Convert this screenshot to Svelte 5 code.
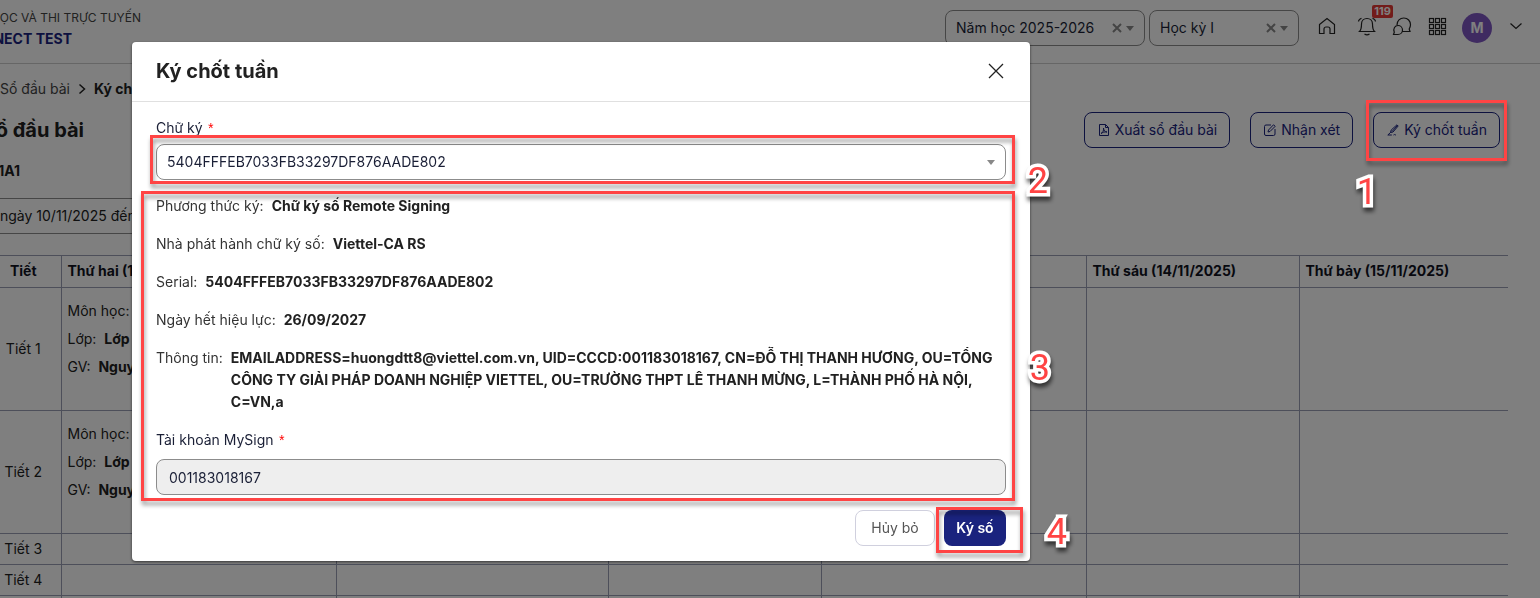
<script lang="ts">
	interface Lesson {
		subject: string;
		className: string;
		teacher: string;
	}

	interface Period {
		name: string;
		lesson: Lesson | null;
	}

	const serial = '5404FFFEB7033FB33297DF876AADE802';

	const days = [
		{ name: 'Thứ hai (10/11/2025)', width: 275 },
		{ name: '', width: 272 },
		{ name: '', width: 213 },
		{ name: '', width: 265 },
		{ name: 'Thứ sáu (14/11/2025)', width: 213 },
		{ name: 'Thứ bảy (15/11/2025)', width: 209 }
	];

	const lesson: Lesson = { subject: '', className: 'Lớp', teacher: 'Nguyễn' };

	const periods: Period[] = [
		{ name: 'Tiết 1', lesson },
		{ name: 'Tiết 2', lesson },
		{ name: 'Tiết 3', lesson: null },
		{ name: 'Tiết 4', lesson: null },
		{ name: '', lesson: null }
	];

	const details = [
		{ label: 'Phương thức ký:', value: 'Chữ ký số Remote Signing' },
		{ label: 'Nhà phát hành chữ ký số:', value: 'Viettel-CA RS' },
		{ label: 'Serial:', value: serial },
		{ label: 'Ngày hết hiệu lực:', value: '26/09/2027' },
		{
			label: 'Thông tin:',
			value:
				'EMAILADDRESS=huongdtt8@viettel.com.vn, UID=CCCD:001183018167, CN=ĐỖ THỊ THANH HƯƠNG, OU=TỔNG CÔNG TY GIẢI PHÁP DOANH NGHIỆP VIETTEL, OU=TRƯỜNG THPT LÊ THANH MỪNG, L=THÀNH PHỐ HÀ NỘI, C=VN,a'
		}
	];

	let account = '001183018167';
</script>

<div class="page">
	<header class="topbar">
		<div class="brand">
			<div class="brand-sub"><span>ỌC VÀ THI TRỰC TUYẾN</span></div>
			<div class="brand-name"><span>NECT TEST</span></div>
		</div>
		<div class="tools">
			<div class="picker year">
				<select aria-label="Năm học">
					<option>Năm học 2025-2026</option>
				</select>
				<button class="clear" aria-label="Xóa năm học">
					<svg width="10" height="10" viewBox="0 0 10 10"><path d="M1 1l8 8M9 1l-8 8" /></svg>
				</button>
				<span class="caret"></span>
			</div>
			<div class="picker term">
				<select aria-label="Học kỳ">
					<option>Học kỳ I</option>
				</select>
				<button class="clear" aria-label="Xóa học kỳ">
					<svg width="10" height="10" viewBox="0 0 10 10"><path d="M1 1l8 8M9 1l-8 8" /></svg>
				</button>
				<span class="caret"></span>
			</div>
			<nav class="icons">
				<button class="icon" aria-label="Trang chủ">
					<svg width="20" height="20" viewBox="0 0 20 20">
						<path d="M2.5 8.5L10 2.500l7.500 6v9H13V13a2 2 0 0 0-2-2H9a2 2 0 0 0-2 2v4.500H2.500z" />
					</svg>
				</button>
				<button class="icon bell" aria-label="Thông báo">
					<svg width="20" height="20" viewBox="0 0 20 20">
						<path
							d="M2.500 15.500c1.500-1.500 2-4 2-7.500C4.500 4.500 7 2.500 10 2.500s5.500 2 5.500 5.500c0 3.500.5 6 2 7.500zM7.500 18c1.500 1 3.500 1 5 0M4.500 2.200C2.500 3 1.500 4 1.500 5.500M15.500 2.200c2 .8 3 1.800 3 3.300"
						/>
					</svg>
					<span class="count">119</span>
				</button>
				<button class="icon" aria-label="Tin nhắn">
					<svg width="20" height="20" viewBox="0 0 20 20">
						<path
							d="M5 9C5 4.500 8 2 11.800 2c4 0 6.700 3 6.700 6.700 0 1.800-.6 3-1.300 4.300l.8 2.500h-7.500M1.500 18.500l.8-2.200C.8 12.500 3 9.500 6 9.500a4.500 4.500 0 0 1 0 9z"
						/>
					</svg>
				</button>
				<button class="icon" aria-label="Ứng dụng">
					<svg width="20" height="20" viewBox="0 0 20 20">
						{#each [2.5, 8.5, 14.5] as y}
							{#each [2.5, 8.5, 14.5] as x}
								<rect {x} {y} width="4" height="4" />
							{/each}
						{/each}
					</svg>
				</button>
			</nav>
			<button class="avatar" aria-label="Tài khoản">M</button>
			<button class="icon more" aria-label="Mở menu tài khoản">
				<svg width="12" height="12" viewBox="0 0 12 12"><path d="M.5 3.500L6 8.500l5.500-5" /></svg>
			</button>
		</div>
	</header>

	<main class="content">
		<nav class="breadcrumb">
			<a href="#so-dau-bai">Sổ đầu bài</a>
			<svg width="8" height="12" viewBox="0 0 8 12"><path d="M1.500 1.500L6.500 6l-5 4.500" /></svg>
			<b>Ký chốt</b>
		</nav>

		<div class="heading">
			<h1><span>ổ đầu bài</span></h1>
			<div class="actions">
				<button class="outline">
					<svg width="12" height="12" viewBox="0 0 12 12">
						<path
							d="M1.500.5h6L10.500 3.500v8h-9zM7.500.5v3h3M3 9.500c2-1 2.800-3 2.500-5.500C5.800 6.500 7 8 9 8 6.500 7.500 4.500 8.500 3 9.500z"
						/>
					</svg>
					Xuất sổ đầu bài
				</button>
				<button class="outline">
					<svg width="12" height="12" viewBox="0 0 12 12">
						<path
							d="M7 1H2A1.500 1.500 0 0 0 .5 2.500V10A1.500 1.500 0 0 0 2 11.500h7.500A1.500 1.500 0 0 0 11 10V5M4 8l.5-2L9.500.8l1.700 1.500L6 7.500z"
						/>
					</svg>
					Nhận xét
				</button>
				<button class="outline">
					<svg width="12" height="12" viewBox="0 0 12 12">
						<path
							d="M3.500 8.500L4.200 6 10 .8l1.200 1.200L6 8zM5 7.500L10.500 1.500M3.500 8.500L.8 11h4M6.500 11c1-1 1.500 0 2.500 0"
						/>
					</svg>
					Ký chốt tuần
				</button>
			</div>
		</div>

		<div class="class-name"><span>1A1</span></div>

		<select class="week" aria-label="Tuần">
			<option>ngày 10/11/2025 đến</option>
		</select>

		<table>
			<colgroup>
				<col style="width: 61px" />
				{#each days as day}
					<col style="width: {day.width}px" />
				{/each}
			</colgroup>
			<thead>
				<tr>
					<th class="period">Tiết</th>
					{#each days as day}
						<th>{day.name}</th>
					{/each}
				</tr>
			</thead>
			<tbody>
				{#each periods as period}
					<tr class:filled={period.lesson}>
						<td class="period">{period.name}</td>
						{#each days as day, i}
							<td>
								{#if i === 0 && period.lesson}
									<p>Môn học: <b>{period.lesson.subject}</b></p>
									<p>Lớp: <b>{period.lesson.className}</b></p>
									<p>GV: <b>{period.lesson.teacher}</b></p>
								{/if}
							</td>
						{/each}
					</tr>
				{/each}
			</tbody>
		</table>
	</main>
</div>

<div class="backdrop">
	<div class="modal" role="dialog" aria-modal="true" aria-labelledby="modal-title">
		<div class="modal-header">
			<h2 id="modal-title">Ký chốt tuần</h2>
			<button class="close" aria-label="Đóng">
				<svg width="16" height="16" viewBox="0 0 16 16"><path d="M1 1l14 14M15 1L1 15" /></svg>
			</button>
		</div>

		<form class="modal-body" on:submit|preventDefault>
			<label for="signature">Chữ ký <span class="required">*</span></label>
			<div class="picker signature">
				<select id="signature">
					<option>{serial}</option>
				</select>
				<span class="caret"></span>
			</div>

			<dl>
				{#each details as item}
					<div class="detail">
						<dt>{item.label}</dt>
						<dd>{item.value}</dd>
					</div>
				{/each}
			</dl>

			<label for="account">Tài khoản MySign <span class="required">*</span></label>
			<input id="account" type="text" readonly bind:value={account} />

			<div class="modal-footer">
				<button type="button" class="cancel">Hủy bỏ</button>
				<button type="submit" class="submit">Ký số</button>
			</div>
		</form>

		<!-- Step markers inside the dialog -->
		<div class="mark mark-select"></div>
		<div class="mark mark-details"></div>
		<div class="mark mark-submit"></div>
		<span class="step step-2">2</span>
		<span class="step step-3">3</span>
		<span class="step step-4">4</span>
	</div>

	<div class="mark mark-open"></div>
	<span class="step step-1">1</span>
</div>

<style>
	:global(body) {
		font-family: Inter, 'Liberation Sans', sans-serif;
		font-size: 14px;
		line-height: 22px;
		color: #212121;
		background: #fff;
	}

	:global(*) {
		box-sizing: border-box;
	}

	button,
	select,
	input {
		font: inherit;
		color: inherit;
	}

	button {
		padding: 0;
		border: none;
		background: none;
		cursor: pointer;
	}

	h1,
	h2,
	p,
	dl,
	dd {
		margin: 0;
	}

	svg {
		display: block;
		flex: none;
		fill: none;
		stroke: currentColor;
	}

	.page {
		height: 100vh;
		overflow: hidden;
	}

	.topbar {
		display: flex;
		justify-content: space-between;
		height: 64px;
		padding: 8px 18px 0 0;
		border-bottom: 1px solid #ccc;
	}

	.brand-sub {
		font-size: 12px;
		line-height: 20px;
		color: #444;
	}

	.brand-name {
		line-height: 22px;
		font-weight: 700;
		color: #1a237e;
	}

	/* Left-clipped texts: the start runs out of the window */
	.brand-sub,
	.brand-name,
	.class-name,
	h1 {
		display: flex;
		justify-content: flex-end;
		white-space: nowrap;
	}

	.brand-sub {
		width: 141px;
	}

	.brand-name {
		width: 72px;
	}

	.tools {
		display: flex;
		align-items: flex-start;
		padding-top: 2px;
	}

	.picker {
		position: relative;
		height: 36px;
		color: #1a1f36;
	}

	.picker select {
		width: 100%;
		height: 100%;
		padding: 0 10px;
		border: 1px solid #8c8c8c;
		border-radius: 8px;
		background: transparent;
		appearance: none;
	}

	.year {
		width: 200px;
		margin-right: 4px;
	}

	.term {
		width: 150px;
		margin-right: 18px;
	}

	.clear {
		position: absolute;
		top: 13px;
		right: 23px;
		color: #888;
	}

	.clear svg {
		stroke-width: 2;
	}

	.caret {
		position: absolute;
		top: 16px;
		right: 11px;
		border: 4px solid transparent;
		border-top: 5px solid #888;
		border-bottom: none;
		pointer-events: none;
	}

	.icons {
		display: flex;
		gap: 15px;
		padding-top: 6px;
	}

	.icon {
		position: relative;
		color: #222;
	}

	.icon svg {
		stroke-width: 1.2;
	}

	.bell {
		margin-left: 5px;
	}

	.count {
		position: absolute;
		top: -11px;
		right: -16px;
		padding: 0 2px;
		border-radius: 2px;
		background: #e53935;
		color: #fff;
		font-size: 11px;
		line-height: 13px;
		font-weight: 700;
	}

	.avatar {
		width: 30px;
		height: 30px;
		margin: 3px 18px 0 15px;
		border-radius: 50%;
		background: #7e57c2;
		color: #fff;
		font-weight: 700;
	}

	.more {
		margin-top: 10px;
	}

	.content {
		padding: 14px 32px 0 0;
	}

	.breadcrumb {
		display: flex;
		align-items: center;
		gap: 8px;
	}

	.breadcrumb a {
		color: #444;
		text-decoration: none;
	}

	.breadcrumb svg {
		stroke-width: 1.5;
	}

	.heading {
		display: flex;
		justify-content: space-between;
		align-items: center;
		padding: 12px 8px 0 0;
	}

	h1 {
		width: 84px;
		font-size: 20px;
		line-height: 28px;
		font-weight: 700;
	}

	.actions {
		display: flex;
		gap: 20px;
	}

	.outline {
		display: flex;
		align-items: center;
		gap: 5px;
		height: 36px;
		padding: 0 12px 0 13px;
		border: 1px solid #1a237e;
		border-radius: 8px;
		color: #1a237e;
		white-space: nowrap;
	}

	.class-name {
		width: 20px;
		margin-top: 12px;
		font-weight: 700;
	}

	.week {
		display: block;
		width: 320px;
		height: 36px;
		margin-top: 16px;
		padding: 0;
		border: solid #8c8c8c;
		border-width: 1px 0;
		background: transparent;
		appearance: none;
	}

	table {
		width: 100%;
		margin-top: 21px;
		border-collapse: collapse;
		table-layout: fixed;
	}

	th,
	td {
		height: 31px;
		padding: 0 6px;
		border: 1px solid #9a9fb5;
		text-align: left;
	}

	th {
		height: 32px;
		padding-bottom: 2px;
		font-weight: 700;
		color: #10131f;
	}

	th:first-child,
	td:first-child {
		border-left: none;
	}

	th:last-child,
	td:last-child {
		border-right: none;
	}

	.period {
		padding-left: 0;
		padding-right: 14px;
		text-align: center;
	}

	.filled td {
		height: 123px;
	}

	.filled td:not(.period) {
		padding-top: 9px;
		vertical-align: top;
	}

	td p {
		line-height: 28px;
	}

	td b {
		margin-left: 4px;
	}

	.backdrop {
		position: fixed;
		inset: 0;
		padding: 42px 24px 0 132px;
		background: rgba(0, 0, 0, 0.5);
	}

	.modal {
		position: relative;
		max-width: 898px;
		border-radius: 4px;
		background: #fff;
		box-shadow: 0 1px 3px rgba(0, 0, 0, 0.6);
	}

	.modal-header {
		display: flex;
		align-items: center;
		justify-content: space-between;
		height: 60px;
		padding: 0 26px 2px 24px;
		border-bottom: 1px solid #e0e0e0;
	}

	.close svg {
		stroke-width: 1.3;
	}

	h2 {
		font-size: 20px;
		line-height: 28px;
		font-weight: 700;
	}

	.modal-body {
		padding: 15px 24px;
	}

	label {
		display: block;
		color: #1a1f36;
	}

	.required {
		margin-left: 1px;
		color: #f00;
		font-family: 'Liberation Sans', Arial, sans-serif;
		font-style: italic;
	}

	.signature {
		margin-top: 5px;
	}

	dl {
		display: flex;
		flex-direction: column;
		gap: 16px;
		padding: 15px 0 16px;
	}

	.detail {
		display: flex;
		gap: 8px;
	}

	dt {
		flex: none;
		color: #333;
	}

	dd {
		font-weight: 700;
	}

	input {
		display: block;
		width: 100%;
		height: 36px;
		margin-top: 8px;
		padding: 0 12px;
		border: 1px solid #8c8c8c;
		border-radius: 8px;
		background: #eee;
		color: #1a1f36;
	}

	.modal-footer {
		display: flex;
		justify-content: flex-end;
		gap: 9px;
		margin-top: 15px;
	}

	.cancel,
	.submit {
		height: 36px;
		border-radius: 8px;
	}

	.cancel {
		width: 80px;
		border: 1px solid #d0d0de;
		color: #555;
	}

	.submit {
		width: 62px;
		background: #1a237e;
		color: #fff;
		font-weight: 600;
	}

	.mark {
		position: absolute;
		border: 3px solid #ff4444;
		filter: drop-shadow(1px 4px 2px rgba(0, 0, 0, 0.4));
		pointer-events: none;
	}

	.mark-select {
		top: 93px;
		left: 18px;
		right: 15px;
		height: 49px;
	}

	.mark-details {
		top: 149px;
		left: 9px;
		right: 15px;
		bottom: 60px;
	}

	.mark-submit {
		right: 7px;
		bottom: 8px;
		width: 87px;
		height: 46px;
	}

	.mark-open {
		top: 100px;
		right: 33px;
		width: 141px;
		height: 61px;
	}

	.step {
		position: absolute;
		color: #ff4444;
		font-family: Roboto, 'Liberation Sans', sans-serif;
		font-size: 36px;
		line-height: 36px;
		-webkit-text-stroke: 7px #fff;
		stroke-linejoin: round;
		paint-order: stroke fill;
		filter: drop-shadow(1px 4px 2px rgba(0, 0, 0, 0.6));
		pointer-events: none;
	}

	.step-1 {
		top: 174px;
		right: 163px;
	}

	.step-2 {
		top: 121px;
		right: -18px;
	}

	.step-3 {
		top: 308px;
		right: -20px;
	}

	.step-4 {
		right: -37px;
		bottom: 11px;
	}
</style>
